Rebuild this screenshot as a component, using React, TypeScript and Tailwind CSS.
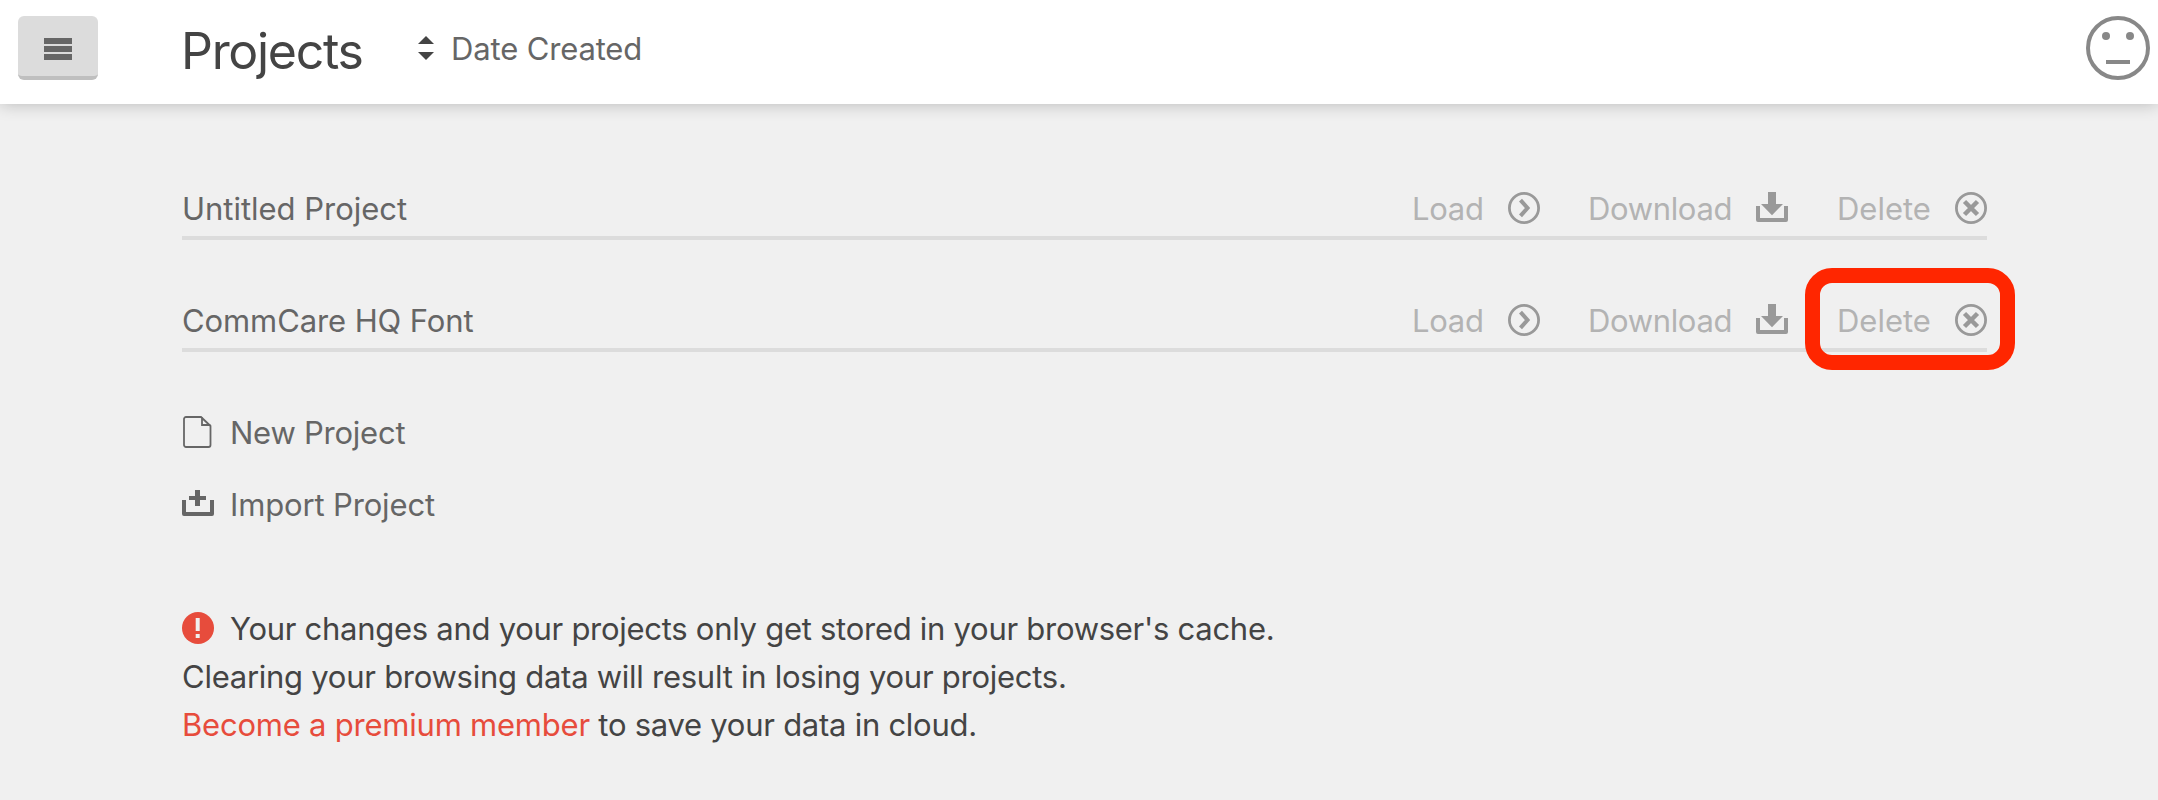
import type { ReactNode } from "react";

const rows = [
  { name: "Untitled Project", tracking: "tracking-[-0.02px]", marked: false },
  { name: "CommCare HQ Font", tracking: "tracking-[-0.1px]", marked: true },
];

function Circled({ children }: { children: ReactNode }) {
  return (
    <svg width="32" height="32" viewBox="0 0 32 32" fill="none" stroke="#999" className="block shrink-0">
      <circle cx="16" cy="16" r="14.6" strokeWidth="2.8" />
      {children}
    </svg>
  );
}

function DownloadIcon() {
  return (
    <svg width="32" height="32" viewBox="0 0 32 32" fill="#999" className="block shrink-0">
      <path d="M12 0h8v12h7L16 23.200 5 12H12z" />
      <path d="M0 14h4v12h24V14h4v14a2 2 0 0 1-2 2H2a2 2 0 0 1-2-2z" />
    </svg>
  );
}

function ProjectRow({ name, tracking, marked }: { name: string; tracking: string; marked: boolean }) {
  return (
    <div className="flex h-[64px] border-b-4 border-[#dcdcdc] text-[31px] leading-[40px] text-[#666]">
      <span className={"mt-[13px] grow whitespace-nowrap " + tracking}>{name}</span>
      <div className="flex text-[#b3b3b3]">
        <a className="flex w-[128px] justify-between">
          <span className="mt-[13px] tracking-[-0.3px]">Load</span>
          <span className="mt-4"><Circled><path d="M12.500 8.200l7 7.800-7 7.800" strokeWidth="4" /></Circled></span>
        </a>
        <a className="ml-12 flex w-[200px] justify-between">
          <span className="mt-[13px] tracking-[-0.35px]">Download</span>
          <span className="mt-4"><DownloadIcon /></span>
        </a>
        <a className="relative ml-12 flex w-[151px] justify-between">
          <span className="mt-[13px] ml-px">Delete</span>
          <span className="mt-4"><Circled><path d="M9.500 9.500l13 13M22.500 9.500l-13 13" strokeWidth="4.500" /></Circled></span>
          {marked && (
            <span className="absolute -top-[20px] -left-[31.500px] h-[102px] w-[210px] rounded-[27px] border-[15px] border-[#ff2600]" />
          )}
        </a>
      </div>
    </div>
  );
}

export default function App() {
  return (
    <div className="h-[800px] w-full overflow-hidden bg-[#f0f0f0] font-['Inter',sans-serif] text-[31px]">
      <header className="flex h-[104px] items-start bg-white pr-2 pl-[18px] shadow-[0_0_16px_rgba(0,0,0,0.24)]">
        <button className="mt-4 flex h-16 w-20 flex-col items-center gap-[2px] rounded-md border-b-4 border-[#bfbfbf] bg-[#dcdcdc] pt-[22px]">
          <span className="h-[6px] w-[28px] bg-[#666]" />
          <span className="h-[6px] w-[28px] bg-[#666]" />
          <span className="h-[6px] w-[28px] bg-[#666]" />
        </button>
        <h1 className="mt-[21px] ml-[83px] w-[237px] text-[50px] leading-[60px] tracking-[-1.3px] text-[#444]">Projects</h1>
        <svg width="16" height="24" viewBox="0 0 16 24" fill="#444" className="mt-9">
          <path d="M0 8L8 0l8 8zM0 16h16l-8 8z" />
        </svg>
        <span className="mt-[29px] ml-[17px] leading-[40px] tracking-[-0.15px] text-[#666]">Date Created</span>
        <svg width="64" height="64" viewBox="0 0 64 64" className="mt-4 ml-auto">
          <circle cx="32" cy="32" r="30" fill="none" stroke="#888" strokeWidth="4" />
          <circle cx="20" cy="20" r="4" fill="#888" />
          <circle cx="44" cy="20" r="4" fill="#888" />
          <path d="M20 44h24v4H20z" fill="#888" />
        </svg>
      </header>
      <main className="w-[1987px] pt-[72px] pl-[182px]">
        <div className="flex flex-col gap-12">
          {rows.map((r) => <ProjectRow key={r.name} {...r} />)}
        </div>
        <div className="mt-[64px] flex h-8 items-center text-[#666]">
          <svg width="32" height="32" viewBox="0 0 32 32" fill="none" stroke="#666" strokeWidth="1.800">
            <path d="M4 1h15l9.500 9v19a2 2 0 0 1-2 2H4a2 2 0 0 1-2-2V3a2 2 0 0 1 2-2zM20 1v8h8.500" />
          </svg>
          <span className="mt-[2px] ml-4 leading-[40px] tracking-[-0.24px]">New Project</span>
        </div>
        <div className="mt-[40px] flex h-8 items-center text-[#666]">
          <svg width="32" height="32" viewBox="0 0 32 32" fill="#666">
            <path d="M13 2h5v6h6v4h-6v6h-5v-6H7V8h6z" />
            <path d="M0 12h4v12h24V12h4v14a2 2 0 0 1-2 2H2a2 2 0 0 1-2-2z" />
          </svg>
          <span className="mt-[2px] ml-4 leading-[40px] tracking-[-0.15px]">Import Project</span>
        </div>
        <div className="mt-[84px] leading-[50px] text-[#444]">
          <p className="flex h-12">
            <svg width="32" height="32" viewBox="0 0 32 32" className="mt-2">
              <circle cx="16" cy="16" r="16" fill="#e74c3c" />
              <path d="M13.700 6h4v13h-4zM13.700 22h4v4h-4z" fill="#f0f0f0" />
            </svg>
            <span className="ml-4 tracking-[-0.275px]">Your changes and your projects only get stored in your browser's cache.</span>
          </p>
          <p className="h-12 tracking-[-0.26px]">Clearing your browsing data will result in losing your projects.</p>
          <p className="h-12"><span className="tracking-[-0.22px] text-[#e74c3c]">Become a premium member</span><span className="tracking-[-0.26px]"> to save your data in cloud.</span></p>
        </div>
      </main>
    </div>
  );
}
